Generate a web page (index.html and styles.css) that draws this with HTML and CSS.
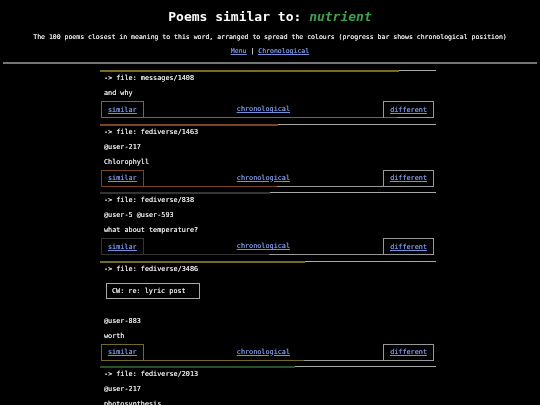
FILE: index.html
```html
<!DOCTYPE html>
<html>
<head>
<meta charset="utf-8">
<title>Poems similar to: nutrient</title>
<link rel="stylesheet" href="styles.css">
</head>
<body>
<div class="page">
<header class="head">
  <h1 class="title">Poems similar to: <em class="word">nutrient</em></h1>
  <p class="sub">The 100 poems closest in meaning to this word, arranged to spread the colours (progress bar shows chronological position)</p>
  <p class="links"><a href="#">Menu</a> | <a href="#">Chronological</a></p>
</header>
<hr class="rule">
<main class="list">
  <section class="poem" style="--c:#7d6b1f;--p:89%">
    <div class="bar"><div class="fill"></div><div class="rest"></div></div>
    <div class="content">
      <p>-&gt; file: messages/1408</p>
      <p>and why</p>
    </div>
    <nav class="nav"><a class="box sim" href="#">similar</a><a href="#">chronological</a><a class="box diff" href="#">different</a></nav>
  </section>
  <section class="poem" style="--c:#7a4520;--p:53%">
    <div class="bar"><div class="fill"></div><div class="rest"></div></div>
    <div class="content">
      <p>-&gt; file: fediverse/1463</p>
      <p>@user-217</p>
      <p>Chlorophyll</p>
    </div>
    <nav class="nav"><a class="box sim" href="#">similar</a><a href="#">chronological</a><a class="box diff" href="#">different</a></nav>
  </section>
  <section class="poem" style="--c:#353535;--p:50.6%">
    <div class="bar"><div class="fill"></div><div class="rest"></div></div>
    <div class="content">
      <p>-&gt; file: fediverse/838</p>
      <p>@user-5 @user-593</p>
      <p>what about temperature?</p>
    </div>
    <nav class="nav"><a class="box sim" href="#">similar</a><a href="#">chronological</a><a class="box diff" href="#">different</a></nav>
  </section>
  <section class="poem" style="--c:#756a26;--p:61%">
    <div class="bar"><div class="fill"></div><div class="rest"></div></div>
    <div class="content">
      <p>-&gt; file: fediverse/3486</p>
      <div class="cw">CW: re: lyric post</div>
      <p class="after-cw">@user-883</p>
      <p>worth</p>
    </div>
    <nav class="nav"><a class="box sim" href="#">similar</a><a href="#">chronological</a><a class="box diff" href="#">different</a></nav>
  </section>
  <section class="poem" style="--c:#23522b;--p:58%">
    <div class="bar"><div class="fill"></div><div class="rest"></div></div>
    <div class="content">
      <p>-&gt; file: fediverse/2013</p>
      <p>@user-217</p>
      <p>photosynthesis</p>
    </div>
    <nav class="nav"><a class="box sim" href="#">similar</a><a href="#">chronological</a><a class="box diff" href="#">different</a></nav>
  </section>
</main>
</div>
</body>
</html>
```

FILE: styles.css
```css
html, body {
  background: #000;
}
body {
  margin: 0;
  color: #e4e4e4;
  font-family: "DejaVu Sans Mono", "Liberation Mono", monospace;
}
.page {
  transform: translateZ(0);
  opacity: 0.999;
}
a {
  color: #7590dc;
  text-decoration: underline;
}
.head {
  text-align: center;
}
.title {
  margin: 9px 0 0;
  font-size: 13px;
  line-height: 15px;
  font-weight: bold;
  color: #fff;
}
.word {
  color: #3fa34d;
  font-style: italic;
}
.sub, .links, .list {
  text-shadow: 0 0 0.25px currentColor;
}
.sub {
  margin: 9px 0 0;
  font-size: 6.5px;
  line-height: 8px;
}
.links {
  margin: 6px 0 0;
  font-size: 6.5px;
  line-height: 8px;
}
.rule {
  margin: 7px 3px 0;
  height: 2px;
  border: none;
  background: #777;
}
.list {
  width: 336px;
  margin: 6px 0 0 100px;
  font-size: 6.8px;
  line-height: 8px;
}
.poem {
  margin-bottom: 5.5px;
}
.bar {
  display: flex;
  align-items: flex-start;
  height: 2px;
}
.fill {
  width: var(--p);
  height: 2px;
  background: var(--c);
}
.rest {
  flex: 1;
  height: 1px;
  background: #aaa;
}
.content {
  padding: 2px 4px 4px;
}
.content p {
  margin: 0;
}
.content p + p {
  margin-top: 7px;
}
.cw {
  display: inline-block;
  margin: 10.5px 0 0 2px;
  padding: 3px 13px 3px 5px;
  border: 1px solid #aaa;
}
.content .after-cw {
  margin-top: 17.5px;
}
.nav {
  display: flex;
  justify-content: space-between;
  align-items: stretch;
  height: 17px;
  margin: 0 2px 0 1px;
  background: linear-gradient(to right, var(--c) var(--p), #999 var(--p)) left bottom / 100% 1px no-repeat;
}
.nav a {
  display: flex;
  align-items: center;
  padding: 0 6px 1px;
}
.box {
  border: 1px solid #999;
  border-bottom: none;
}
.box.sim {
  border-color: var(--c);
}
```
